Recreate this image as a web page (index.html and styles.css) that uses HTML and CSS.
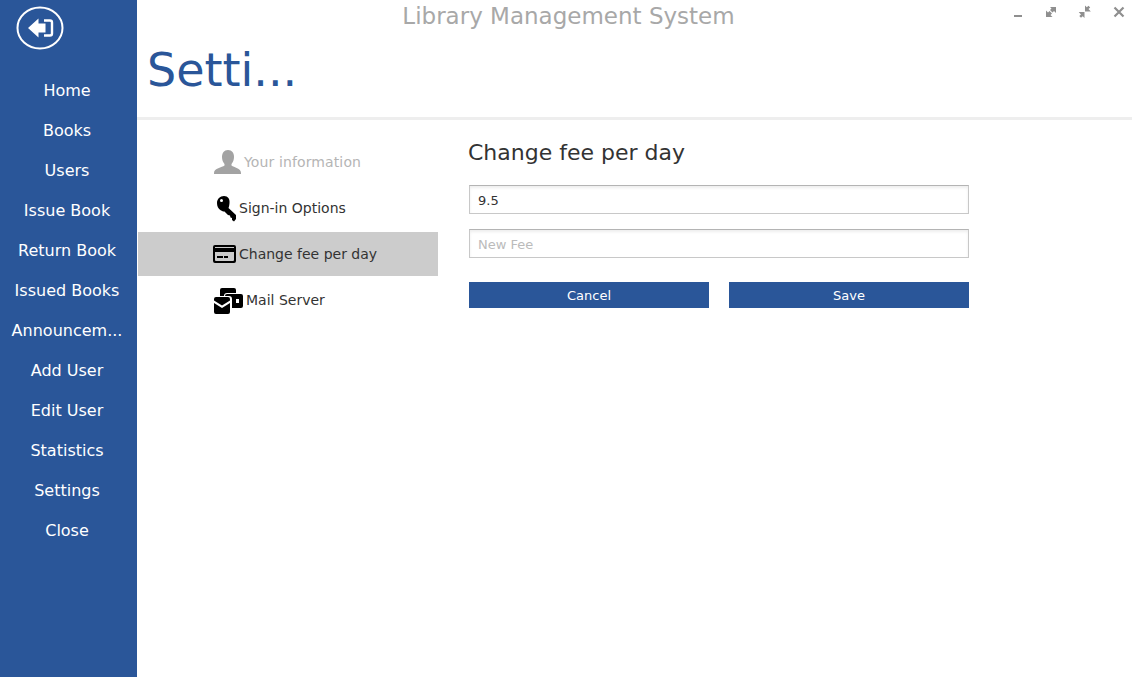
FILE: index.html
```html
<!DOCTYPE html>
<html>
<head>
	<meta charset="utf-8">
	<title>Library Management System</title>
	<link rel="stylesheet" href="styles.css">
</head>
<body>
	<nav class="sidebar">
		<div class="back">
			<svg width="48" height="44" viewBox="0 0 48 44">
				<ellipse cx="24" cy="22" rx="22.5" ry="20.5" fill="none" stroke="#fff" stroke-width="2"/>
				<path d="M12 22 L22.500 12.500 V17.500 H29.500 V26.500 H22.500 V31.500 Z" fill="#fff"/>
				<path d="M28 14.500 H34 Q36 14.500 36 16.500 V27.500 Q36 29.500 34 29.500 H28" fill="none" stroke="#fff" stroke-width="2.400"/>
			</svg>
		</div>
		<a class="nav-item">Home</a>
		<a class="nav-item">Books</a>
		<a class="nav-item">Users</a>
		<a class="nav-item">Issue Book</a>
		<a class="nav-item">Return Book</a>
		<a class="nav-item">Issued Books</a>
		<a class="nav-item">Announcem...</a>
		<a class="nav-item">Add User</a>
		<a class="nav-item">Edit User</a>
		<a class="nav-item">Statistics</a>
		<a class="nav-item">Settings</a>
		<a class="nav-item">Close</a>
	</nav>

	<div class="page">
		<header class="header">
			<div class="titlebar">
				<div class="app-title">Library Management System</div>
				<div class="win-controls">
					<svg width="12" height="12" viewBox="0 0 12 12"><rect x="3" y="9" width="8" height="2" fill="#8f8f8f"/></svg>
					<svg width="12" height="12" viewBox="0 0 12 12"><path d="M1 11 V4.500 L3 6.500 L4.500 5 L7 7.500 L5.500 9 L7.500 11 Z M11 1 V7 L9 5 L7.500 6.500 L5 4 L6.500 2.500 L5 1 Z" fill="#8f8f8f"/></svg>
					<svg width="12" height="12" viewBox="0 1 12 12"><path d="M6 6.500 V0.500 L7.800 2.300 L9.500 0.700 L11.200 2.400 L9.500 4.100 L11.800 6.500 Z M5.500 7 V13 L3.700 11.200 L2 12.800 L0.300 11.100 L2 9.400 L-0.300 7 Z" fill="#8f8f8f"/></svg>
					<svg width="12" height="12" viewBox="0 0 12 12"><path d="M1.500 1.500 L10.500 10.500 M10.500 1.500 L1.500 10.500" stroke="#8f8f8f" stroke-width="2.200"/></svg>
				</div>
			</div>
			<h1 class="page-title">Setti...</h1>
		</header>

		<div class="content">
			<ul class="menu">
				<li class="menu-item muted">
					<svg width="30" height="24" viewBox="0 0 30 24"><path d="M15 0 C19 0 21 3 21 7 C21 10 20 12 18.500 14 V15.500 C21 17.500 28 18 28 23 V24 H1 V23 C1 18 9 17.500 11.500 15.500 V14 C10 12 9 10 9 7 C9 3 11 0 15 0 Z" fill="#a3a3a3"/></svg>
					Your information
				</li>
				<li class="menu-item">
					<svg class="icon-key" width="22" height="26" viewBox="0 0 22 26"><path d="M9 0 C13 0 15 3 14.500 7 C14.300 9 14 11 13.500 12 L21 19 V23 L19 25.500 L17 24 V22 L15.500 21.500 L15 19.500 L13 19 L9.500 15.500 C8 15.500 7 15 6 14.500 C3 13 2 10 2 7 C2 3 5 0 9 0 Z" fill="#000"/><circle cx="6.500" cy="4.500" r="1.500" fill="#fff"/></svg>
					Sign-in Options
				</li>
				<li class="menu-item active">
					<svg width="23" height="18" viewBox="0 0 23 18"><path fill-rule="evenodd" d="M2 0 H21 Q23 0 23 2 V16 Q23 18 21 18 H2 Q0 18 0 16 V2 Q0 0 2 0 Z M2 2 V3 H21 V2 Z M2 7 V15 Q2 16 3 16 H20 Q21 16 21 15 V7 Z" fill="#000"/><path d="M4 11 H10 V13 H4 Z M11 11 H15 V13 H11 Z" fill="#000"/></svg>
					Change fee per day
				</li>
				<li class="menu-item">
					<svg class="icon-mail" width="30" height="26" viewBox="0 0 30 26"><path fill-rule="evenodd" d="M6 2 Q6 0 8 0 H20 Q22 0 22 2 V5 H13 Q10 5 10 8 H6 Z M11 8 Q11 6 13 6 H27 Q29 6 29 8 V18 Q29 20 27 20 H18 V11 Q18 8 15 8 Z M22 11 V15 H25 V11 Z" fill="#000"/><path d="M0 11 Q0 9 2 9 H14 Q16 9 16 11 V12.500 L8 17.500 L0 12.500 Z M0 15 L8 20 L16 15 V24 Q16 26 14 26 H2 Q0 26 0 24 Z" fill="#000"/></svg>
					Mail Server
				</li>
			</ul>

			<section class="form">
				<h2 class="form-title">Change fee per day</h2>
				<input class="field" type="text" value="9.5">
				<input class="field" type="text" placeholder="New Fee">
				<div class="buttons">
					<button class="btn">Cancel</button>
					<button class="btn">Save</button>
				</div>
			</section>
		</div>
	</div>
</body>
</html>
```

FILE: styles.css
```css
* {
	box-sizing: border-box;
}

html, body {
	height: 100%;
}

body {
	margin: 0;
	display: flex;
	overflow: hidden;
	background-color: #fff;
	font-family: "DejaVu Sans", sans-serif;
	color: #333;
}

.sidebar {
	width: 137px;
	height: 677px;
	flex-shrink: 0;
	background-color: #2a5699;
	color: #fff;
}

.back {
	height: 71px;
	padding: 6px 0 0 16px;
}

.back svg {
	display: block;
}

.nav-item {
	display: block;
	height: 40px;
	padding-right: 3px;
	line-height: 40px;
	font-size: 16px;
	text-align: center;
}

.page {
	flex: 1;
}

.header {
	height: 120px;
	border-bottom: 3px solid #eee;
}

.titlebar {
	display: flex;
	height: 34px;
}

.app-title {
	flex: 1;
	padding-top: 1px;
	font-size: 23px;
	line-height: 30px;
	text-align: center;
	color: #a8a8a8;
}

.win-controls {
	width: 132px;
	display: flex;
	gap: 22px;
	padding: 6px 7px 0 12px;
	justify-content: flex-end;
}

.win-controls svg {
	display: block;
	overflow: visible;
}

.page-title {
	margin: 0;
	padding: 1px 0 0 10px;
	font-size: 46px;
	font-weight: normal;
	line-height: 70px;
	color: #2a5699;
}

.content {
	display: flex;
	padding-top: 20px;
}

.menu {
	width: 301px;
	margin: 0;
	padding: 0 0 0 1px;
	list-style: none;
}

.menu-item {
	display: flex;
	align-items: center;
	gap: 3px;
	height: 44px;
	margin-bottom: 2px;
	padding-left: 75px;
	font-size: 14px;
}

.menu-item.muted {
	color: #b5b5b5;
	gap: 1px;
	letter-spacing: 0.12px;
}

.menu-item.active {
	background-color: #ccc;
}

.icon-key {
	margin: 2px -1px 0 2px;
}

.icon-mail {
	margin: 2px -1px 0 1px;
}

.form {
	width: 500px;
	margin-left: 31px;
}

.form-title {
	margin: 0 0 19px -1px;
	font-size: 22px;
	font-weight: normal;
	line-height: 26px;
}

.field {
	display: block;
	width: 100%;
	height: 29px;
	margin-bottom: 15px;
	padding: 2px 8px 0;
	border: 1px solid #c8c8c8;
	border-top-color: #b4b4b4;
	box-shadow: inset 0 2px 3px #eee;
	outline: none;
	font-family: inherit;
	font-size: 13px;
	color: #333;
}

.field::placeholder {
	color: #bbb;
}

.buttons {
	display: flex;
	gap: 20px;
	margin-top: 24px;
}

.btn {
	flex: 1;
	height: 26px;
	border: none;
	padding: 0;
	background-color: #2a5699;
	font-family: inherit;
	font-size: 13px;
	color: #fff;
}
```
